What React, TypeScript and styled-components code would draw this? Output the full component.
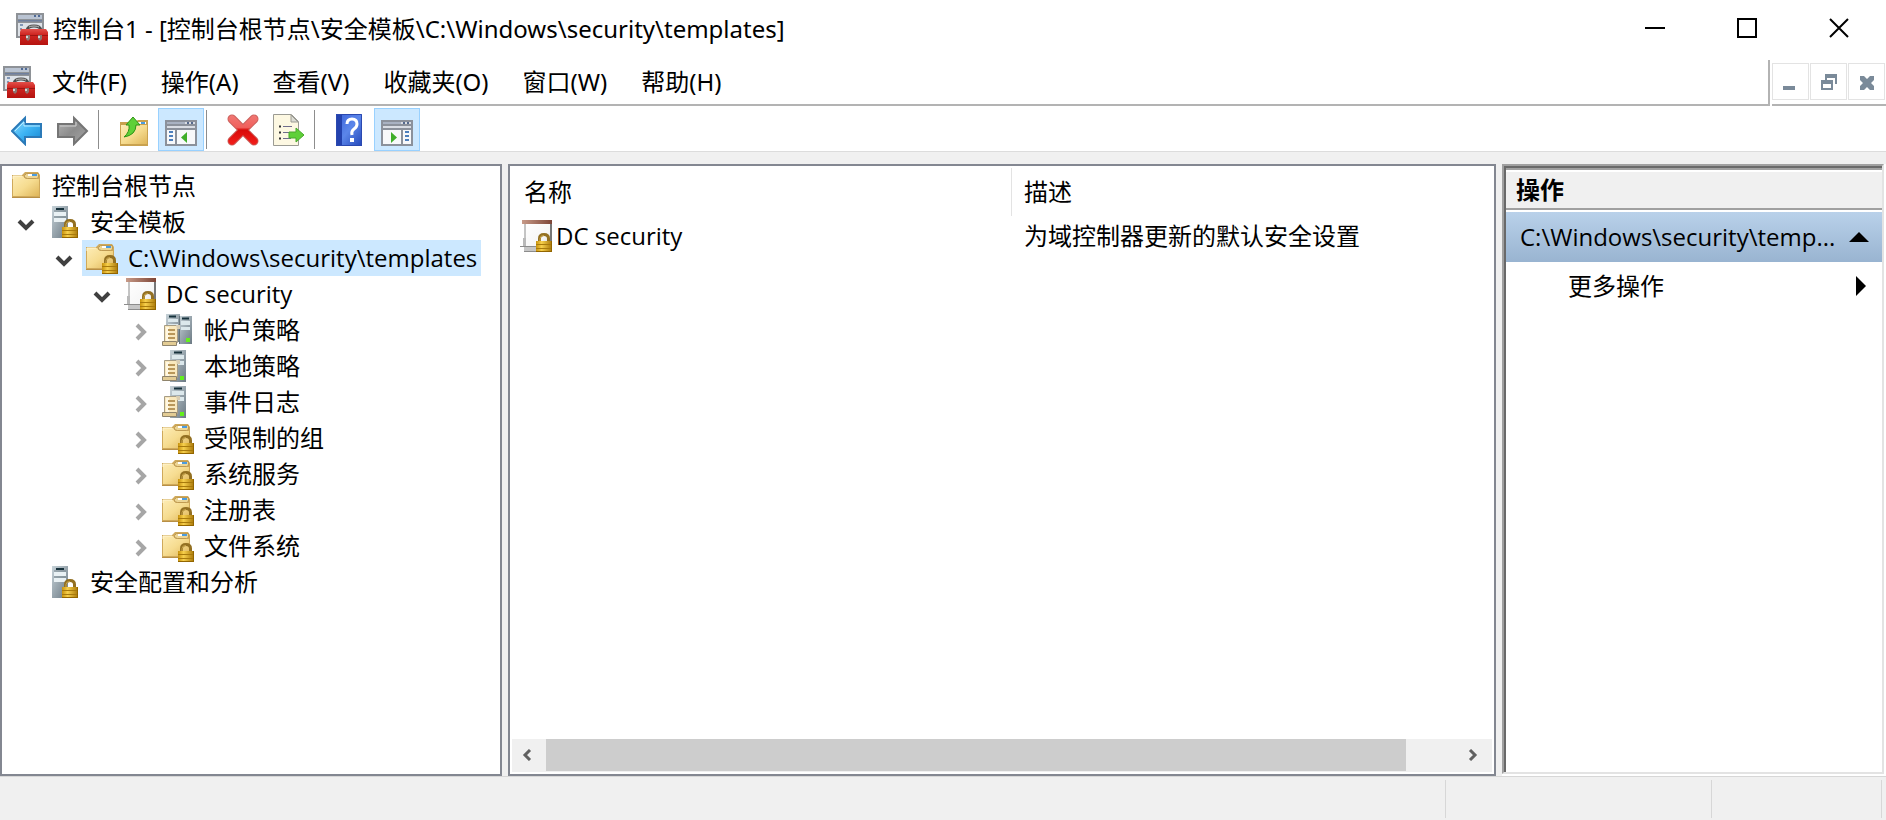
import React from 'react';
import styled, { createGlobalStyle, css } from 'styled-components';

const GlobalStyle = createGlobalStyle`
  *, *::before, *::after { box-sizing: border-box; }
  body {
    margin: 0;
    background: #f0f0f0;
    color: #000;
    font: 24px/36px "Open Sans", "Noto Sans CJK SC", sans-serif;
  }
  button {
    margin: 0;
    padding: 0;
    border: 0;
    background: none;
    color: inherit;
    font: inherit;
  }
  svg { display: block; flex: none; }
`;

/* ---------- frame ---------- */

const frameFont = '"Noto Sans", "Noto Sans CJK SC", sans-serif';

const Window = styled.div`
  display: flex;
  flex-direction: column;
  min-height: 100vh;
`;

const TitleBar = styled.header`
  display: flex;
  align-items: center;
  height: 60px;
  padding: 0 1px 2px 16px;
  background: #fff;
  font-family: ${frameFont};
`;

const Title = styled.h1`
  flex: 1;
  min-width: 0;
  margin: 0;
  padding-left: 5px;
  overflow: hidden;
  font-size: 24px;
  font-weight: 400;
  white-space: nowrap;
  text-overflow: ellipsis;
`;

const CaptionButton = styled.button`
  display: flex;
  align-self: flex-start;
  justify-content: center;
  align-items: center;
  width: 92px;
  height: 56px;
`;

const MenuRow = styled.div`
  display: flex;
  height: 48px;
  background: #fff;
  font-family: ${frameFont};
`;

const MenuBar = styled.nav`
  display: flex;
  flex: 1;
  align-items: center;
  padding-left: 3px;
  border-right: 2px solid #b3b3b3;
  border-bottom: 2px solid #b3b3b3;
  margin-bottom: 2px;
`;

const MenuButton = styled.button`
  padding: 0 17px;
  white-space: nowrap;
`;

const ChildControls = styled.div`
  display: flex;
  gap: 1px;
  margin: 0 0 2px 2px;
  padding: 3px 1px 0 0;
  border-bottom: 2px solid #b3b3b3;
`;

const ChildButton = styled.button`
  display: flex;
  justify-content: center;
  align-items: center;
  width: 37px;
  height: 37px;
  border: 1px solid #e3e3e3;
`;

const ToolBar = styled.div`
  display: flex;
  align-items: center;
  height: 44px;
  padding-left: 4px;
  border-bottom: 1px solid #dcdcdc;
  background: #fff;
`;

const ToolButton = styled.button<{ $on?: boolean }>`
  display: flex;
  justify-content: center;
  align-items: center;
  width: 46px;
  height: 43px;
  border: 1px solid transparent;
  ${(p) => p.$on && css`
    border-color: #99d1ff;
    background: #cce8ff;
  `}
`;

const ToolDivider = styled.span`
  width: 1px;
  height: 39px;
  margin: 0 13px 0 2px;
  background: #8d8d8d;
`;

const Panes = styled.main`
  display: flex;
  flex: 1;
  gap: 6px;
  padding-top: 12px;
`;

const Pane = styled.section`
  border: 2px solid #838791;
  background: #fff;
`;

/* ---------- tree ---------- */

const TreePane = styled(Pane)`
  flex: none;
  width: 502px;
`;

const Tree = styled.ul`
  margin: 0;
  padding: 2px 0 0;
  list-style: none;
`;

const TreeRow = styled.li<{ $level: number }>`
  display: flex;
  align-items: center;
  height: 36px;
  padding-left: ${(p) => 8 + 38 * Math.max(0, p.$level - 1)}px;
`;

const Expander = styled.button`
  display: flex;
  justify-content: center;
  flex: none;
  width: 32px;
  margin-right: 2px;
  padding-top: 4px;
`;

const ExpanderSpace = styled.span`
  flex: none;
  width: 34px;
`;

const TreeLabel = styled.button<{ $selected?: boolean; $root?: boolean }>`
  display: flex;
  align-items: center;
  gap: 10px;
  height: 36px;
  padding: 0 4px;
  margin-left: ${(p) => (p.$root ? -4 : 0)}px;
  background: ${(p) => (p.$selected ? '#cce8ff' : 'none')};
  white-space: nowrap;
`;

/* ---------- list ---------- */

const ListPane = styled(Pane)`
  display: flex;
  flex: 1;
  flex-direction: column;
  justify-content: space-between;
  min-width: 0;
  padding: 2px;
`;

const List = styled.table`
  width: 100%;
  border-collapse: separate;
  border-spacing: 0;
  table-layout: fixed;
`;

const HeadCell = styled.th<{ $wide?: boolean }>`
  height: 48px;
  padding: 0 12px;
  ${(p) => p.$wide && css`
    width: 500px;
    border-right: 1px solid #e3e3e3;
  `}
  font-weight: 400;
  text-align: left;
`;

const Cell = styled.td`
  height: 40px;
  padding: 0 12px;
  white-space: nowrap;
`;

const NameCell = styled(Cell)`
  padding-left: 8px;
`;

const ItemName = styled.span`
  display: flex;
  align-items: center;
  gap: 4px;
`;

const ScrollBar = styled.div`
  display: flex;
  height: 33px;
  background: #f0f0f0;
`;

const ScrollButton = styled.button`
  display: flex;
  flex: none;
  justify-content: center;
  align-items: center;
  width: 34px;
  padding: 0 4px 2px 0;
`;

const ScrollTrack = styled.div`
  display: flex;
  flex: 1;
  padding-bottom: 1px;
  &::after { content: ''; flex: 2; }
`;

const ScrollThumb = styled.div`
  flex: 33;
  background: #cdcdcd;
`;

/* ---------- actions ---------- */

const ActionsPane = styled.aside`
  flex: none;
  width: 384px;
  padding: 0 2px 2px 0;
  background: #fff;
`;

const ActionsEdge = styled.div`
  height: 100%;
  border: 2px solid #e3e3e3;
  border-top-color: #a0a0a0;
  border-left-color: #a0a0a0;
`;

const ActionsBody = styled.div`
  height: 100%;
  border-top: 2px solid #696969;
  border-left: 2px solid #696969;
`;

const ActionsHeading = styled.h2`
  height: 42px;
  margin: 0;
  padding-left: 10px;
  border-top: 2px solid #a0a0a0;
  border-bottom: 2px solid #a0a0a0;
  background: #f0f0f0;
  box-shadow: inset 0 2px #fff;
  font-size: 24px;
  font-weight: 700;
  line-height: 40px;
`;

const ActionGroup = styled.button`
  display: flex;
  justify-content: space-between;
  align-items: center;
  width: 100%;
  height: 50px;
  margin-top: 2px;
  padding: 0 13px 0 14px;
  background: linear-gradient(#b9d1ea, #99b4d1);
  white-space: nowrap;
`;

const ActionItem = styled(ActionGroup)`
  margin: 0;
  padding: 0 16px 2px 62px;
  background: none;
`;

/* ---------- status ---------- */

const StatusBar = styled.footer`
  display: flex;
  height: 44px;
  padding: 3px 4px 2px 0;
  border-top: 1px solid #d7d7d7;
`;

const StatusPart = styled.div<{ $width?: number }>`
  flex: ${(p) => (p.$width ? 'none' : '1')};
  width: ${(p) => (p.$width ? `${p.$width}px` : 'auto')};
  border-right: 1px solid #d7d7d7;
`;

/* ---------- icons ---------- */

const GradientDefs = styled.svg`
  position: absolute;
`;

const Gradients = () => (
  <GradientDefs width="0" height="0" aria-hidden="true">
    <defs>
      <linearGradient id="folder" x1="0" y1="0" x2="1" y2="1">
        <stop offset="0" stopColor="#fdecb5" /><stop offset=".5" stopColor="#f6dc90" /><stop offset="1" stopColor="#dfb65a" />
      </linearGradient>
      <linearGradient id="brass" x1="0" y1="0" x2="1" y2="0">
        <stop offset="0" stopColor="#c8920c" /><stop offset=".35" stopColor="#f6cf4c" /><stop offset="1" stopColor="#a97708" />
      </linearGradient>
      <linearGradient id="steel" x1="0" y1="0" x2="1" y2="1">
        <stop offset="0" stopColor="#c6d2d8" /><stop offset=".5" stopColor="#98a5ad" /><stop offset="1" stopColor="#6c7a84" />
      </linearGradient>
      <linearGradient id="red" x1="0" y1="0" x2="0" y2="1">
        <stop offset="0" stopColor="#e2504a" /><stop offset=".35" stopColor="#cf2622" /><stop offset="1" stopColor="#b5130f" />
      </linearGradient>
      <linearGradient id="cross" gradientUnits="userSpaceOnUse" x1="0" y1="0" x2="0" y2="32">
        <stop offset="0" stopColor="#f07a76" /><stop offset=".42" stopColor="#f0605c" /><stop offset=".5" stopColor="#d80a08" /><stop offset="1" stopColor="#f5201c" />
      </linearGradient>
      <linearGradient id="blue" x1="0" y1="0" x2="1" y2="1">
        <stop offset="0" stopColor="#9be0ff" /><stop offset=".5" stopColor="#3db4f4" /><stop offset="1" stopColor="#1585d0" />
      </linearGradient>
      <linearGradient id="gray" x1="0" y1="0" x2="1" y2="1">
        <stop offset="0" stopColor="#b4b4b4" /><stop offset=".5" stopColor="#8c8c8c" /><stop offset="1" stopColor="#a6a6a6" />
      </linearGradient>
      <linearGradient id="book" x1="0" y1="0" x2="1" y2="1">
        <stop offset="0" stopColor="#3a62d8" /><stop offset=".5" stopColor="#5b86ea" /><stop offset="1" stopColor="#2347b8" />
      </linearGradient>
      <linearGradient id="paper" x1="0" y1="0" x2="1" y2="1">
        <stop offset="0" stopColor="#ffffff" /><stop offset=".6" stopColor="#f6f6f6" /><stop offset="1" stopColor="#d2d2d2" />
      </linearGradient>
      <linearGradient id="brown" x1="0" y1="0" x2="1" y2="0">
        <stop offset="0" stopColor="#c79a88" /><stop offset="1" stopColor="#7d4536" />
      </linearGradient>
    </defs>
  </GradientDefs>
);

const Icon = ({ children }: { children: React.ReactNode }) => (
  <svg width="32" height="32" viewBox="0 0 32 32" aria-hidden="true">{children}</svg>
);

const Lock = ({ x = 0 }: { x?: number }) => (
  <g transform={`translate(${x} 0)`}>
    <path d="M19.500 22V18.500Q19.500 14.500 24 14.500T28.500 18.500V22" fill="none" stroke="#937022" strokeWidth="3" />
    <path d="M20 21V18.500Q20 15.500 24 15.500" fill="none" stroke="#c9a64c" strokeWidth="1" />
    <rect x="16" y="21" width="16" height="11" fill="url(#brass)" />
    <path d="M16 24.500h16M16 28.500h16" stroke="#a87a0c" strokeWidth="1" />
    <path d="M16 31.500h16M31.500 21v11" stroke="#936600" strokeWidth="1" />
  </g>
);

const FolderShape = ({ x = 0 }: { x?: number }) => (
  <g transform={`translate(${x} 0)`}>
    <path d="M0 5h10l3-3h13l2 3v23H0z" fill="#cfa95b" />
    <path d="M1 6h10l3 3h13v17H1z" fill="url(#folder)" />
    <path d="M12.500 5.500l2-2h12v4l-2 1h-9l-3-1z" fill="#ecd594" stroke="#bf9a52" strokeWidth="1" />
    <path d="M16 4h5v2h-5z" fill="#fff" /><path d="M20 4h5v2h-5z" fill="#4a9ce0" />
    <path d="M1 9V6h9" fill="none" stroke="#fff6d6" strokeWidth="1" />
    <path d="M0 27.500h28" stroke="#b88f45" strokeWidth="1" />
  </g>
);

const FolderIcon = () => <Icon><FolderShape x={2} /></Icon>;
const FolderLockIcon = () => <Icon><FolderShape /><Lock /></Icon>;

const ServerLockIcon = () => (
  <Icon>
    <rect x="4" y="0" width="16" height="32" fill="url(#steel)" />
    <path d="M6 6h12v4H6zM6 12h12v4H6z" fill="#e9f1f4" />
    <path d="M8 3h8" stroke="#17323c" strokeWidth="2" />
    <path d="M6 5h12M6 11h12" stroke="#7c8b93" strokeWidth="1" />
    <Lock x={-2} />
  </Icon>
);

const TemplateIcon = () => (
  <Icon>
    <path d="M5 3h26v28H5z" fill="url(#paper)" stroke="#8b8b8b" strokeWidth="1" />
    <path d="M30 4h2v28h-2z" fill="#777" />
    <path d="M2 0h30v4H2z" fill="url(#brown)" />
    <path d="M3 18h3v8H3z" fill="#b9b9b9" />
    <path d="M4 26h15v5H4z" fill="#c6c6c6" />
    <path d="M0 26.500h18M4 31.500h14" stroke="#8c8c8c" strokeWidth="1" />
    <Lock />
  </Icon>
);

const Scroll = ({ y = 0 }: { y?: number }) => (
  <g transform={`translate(0 ${y})`}>
    <path d="M2.500 10.500h13v17h-13z" fill="#f9e8bd" stroke="#a79c84" strokeWidth="1" />
    <path d="M4 12h3v14H4z" fill="#fff8e4" />
    <path d="M6 15h7M6 19h7M6 23h7" stroke="#b9975a" strokeWidth="2" />
    <path d="M.5 26.500h14v4H.5z" fill="#e3cc94" stroke="#8f846c" strokeWidth="1" />
    <path d="M14 10h4v4h-3z" fill="#d8cdb4" />
  </g>
);

const ServerIcon = () => (
  <Icon>
    <rect x="8" y="0" width="16" height="32" fill="url(#steel)" />
    <path d="M10 5h12v4H10zM10 11h12v4H10z" fill="#dce8ec" />
    <path d="M12 2.500h8" stroke="#17323c" strokeWidth="2" />
    <Scroll />
    <path d="M18 26h4v4h-4z" fill="#63f01c" />
  </Icon>
);

const ServersIcon = () => (
  <Icon>
    <rect x="4" y="0" width="14" height="28" fill="url(#steel)" />
    <path d="M6 5h10v3H6zM6 10h10v3H6z" fill="#dce8ec" />
    <path d="M7 2.500h7" stroke="#17323c" strokeWidth="2" />
    <rect x="17" y="2" width="13" height="28" fill="url(#steel)" />
    <path d="M19 7h9v4h-9zM19 13h9v3h-9z" fill="#dce8ec" />
    <path d="M20 4.500h7" stroke="#17323c" strokeWidth="2" />
    <path d="M17.500 2v28" stroke="#66747c" strokeWidth="1" />
    <Scroll y={1} />
    <path d="M24 24h4v4h-4z" fill="#63f01c" />
  </Icon>
);

const ConsoleIcon = () => (
  <Icon>
    <path d="M0 0h28v25H0z" fill="#8e9297" />
    <path d="M2 2h24v4H2z" fill="#b9c3d2" /><path d="M18 2h2v2h-2zM22 2h2v2h-2z" fill="#4f6a96" />
    <path d="M2 7h24v1.500H2z" fill="#6e7f9e" />
    <path d="M2 10h24v13H2z" fill="#dde2e8" />
    <path d="M4 12h3M4 16h2M4 20h2" stroke="#8196b5" strokeWidth="2" />
    <path d="M11 17q1-4 7-4t7 4" fill="none" stroke="#4f4f4f" strokeWidth="3" />
    <path d="M13 14q1-1 5-1t5 1" fill="none" stroke="#c0c0c0" strokeWidth="1" />
    <path d="M5 16h25l2 3v13H4V19z" fill="url(#red)" />
    <path d="M4 22.500h28" stroke="#a01512" strokeWidth="1" />
    <path d="M10 22h4v4l-2 2-2-2zM22 22h4v4l-2 2-2-2z" fill="#8e7570" />
    <path d="M10 23h2v2h-2zM22 23h2v2h-2z" fill="#d4dada" />
  </Icon>
);

const BackIcon = () => (
  <Icon>
    <path d="M1 17L14 4v6h16v13H14v7z" fill="url(#blue)" stroke="#2b7ab8" strokeWidth="2" />
    <path d="M4 17l9-9v4h16" fill="none" stroke="#b9eaff" strokeWidth="1" />
  </Icon>
);

const ForwardIcon = () => (
  <Icon>
    <path d="M30 17L17 4v6H1v13h16v7z" fill="url(#gray)" stroke="#757575" strokeWidth="2" />
    <path d="M3 12h16V8" fill="none" stroke="#cfcfcf" strokeWidth="1" />
  </Icon>
);

const UpFolderIcon = () => (
  <Icon>
    <path d="M1 8h15l3-2h10v26H1z" fill="#c9a24f" />
    <path d="M2 11h26v19H2z" fill="url(#folder)" />
    <path d="M19 8h8v2h-8z" fill="#fff" /><path d="M22 8h4v2h-4z" fill="#4a9ce0" />
    <path d="M14 3l7 8h-4q0 10-12 12 6-5 5-12H7z" fill="#5fd038" stroke="#2f9416" strokeWidth="1" />
  </Icon>
);

const WindowPaneIcon = ({ flip }: { flip?: boolean }) => (
  <Icon>
    <path d="M0 6h32v26H0z" fill="#8b919b" />
    <path d="M2 8h28v2H2zM2 12h28v2H2z" fill="#d9dde4" />
    <path d="M2 8h18v2H2z" fill="#a9b2c2" /><path d="M22 8h2v2h-2zM26 8h2v2h-2z" fill="#566a8e" />
    <g transform={flip ? 'translate(32 0) scale(-1 1)' : undefined}>
      <path d="M2 16h8v14H2zM12 16h18v14H12z" fill="#f7f8fa" />
      <path d="M4 18h4M4 22h4M4 26h4" stroke="#4d7fbd" strokeWidth="2" />
      <path d="M22 18v11l-6-5.500z" fill="#3fae2a" />
    </g>
  </Icon>
);

const DeleteIcon = () => (
  <Icon>
    <path d="M5 5L27 27M27 5L5 27" stroke="#c9605c" strokeWidth="9" strokeLinecap="round" />
    <path d="M5 5L27 27M27 5L5 27" stroke="url(#cross)" strokeWidth="7" strokeLinecap="round" />
  </Icon>
);

const ExportIcon = () => (
  <Icon>
    <path d="M.5.500h18l7 7V31.500H.5z" fill="#fdf8e2" stroke="#9b9b93" strokeWidth="1" />
    <path d="M18 1v7h7z" fill="#dcdcd4" stroke="#9b9b93" strokeWidth="1" />
    <path d="M6 12.500h2M6 18.500h2M6 24.500h2" stroke="#333" strokeWidth="2" />
    <path d="M10 12.500h9M10 18.500h8M10 24.500h8" stroke="#6f6c8c" strokeWidth="1" />
    <path d="M16 18h7v-4l8 7-8 7v-4h-7z" fill="#5fd038" stroke="#48a82c" strokeWidth="1" />
  </Icon>
);

const HelpIcon = () => (
  <Icon>
    <path d="M1 0h26v32H1z" fill="url(#book)" />
    <path d="M1 0h6v32H1z" fill="#2342ae" />
    <path d="M1.500.500h25v31h-25z" fill="none" stroke="#2b49b0" strokeWidth="1" />
    <path d="M12 10q0-5 5-5t5 5q0 3-3 5t-2 6" fill="none" stroke="#fff" strokeWidth="3" />
    <path d="M15 24h4v4h-4z" fill="#fff" />
  </Icon>
);

const Chevron = ({ open }: { open?: boolean }) => (
  <svg width="18" height="18" viewBox="0 0 18 18" aria-hidden="true">
    {open
      ? <path d="M2 6l7 7 7-7" fill="none" stroke="#404040" strokeWidth="4" />
      : <path d="M6 2l7 7-7 7" fill="none" stroke="#a6a6a6" strokeWidth="4" />}
  </svg>
);

const ScrollArrow = ({ right }: { right?: boolean }) => (
  <svg width="10" height="12" viewBox="0 0 10 12" aria-hidden="true">
    <path d={right ? 'M2 1l5 5-5 5' : 'M8 1L3 6l5 5'} fill="none" stroke="#606060" strokeWidth="3" />
  </svg>
);

/* ---------- data ---------- */

type Node = { label: string; level: number; icon: React.FC; open?: boolean; selected?: boolean };

const nodes: Node[] = [
  { label: '控制台根节点', level: 0, icon: FolderIcon },
  { label: '安全模板', level: 1, icon: ServerLockIcon, open: true },
  { label: 'C:\\Windows\\security\\templates', level: 2, icon: FolderLockIcon, open: true, selected: true },
  { label: 'DC security', level: 3, icon: TemplateIcon, open: true },
  { label: '帐户策略', level: 4, icon: ServersIcon, open: false },
  { label: '本地策略', level: 4, icon: ServerIcon, open: false },
  { label: '事件日志', level: 4, icon: ServerIcon, open: false },
  { label: '受限制的组', level: 4, icon: FolderLockIcon, open: false },
  { label: '系统服务', level: 4, icon: FolderLockIcon, open: false },
  { label: '注册表', level: 4, icon: FolderLockIcon, open: false },
  { label: '文件系统', level: 4, icon: FolderLockIcon, open: false },
  { label: '安全配置和分析', level: 1, icon: ServerLockIcon },
];

const menus = ['文件(F)', '操作(A)', '查看(V)', '收藏夹(O)', '窗口(W)', '帮助(H)'];

export default function App() {
  return (
    <Window>
      <GlobalStyle />
      <Gradients />
      <TitleBar>
        <ConsoleIcon />
        <Title>控制台1 - [控制台根节点\安全模板\C:\Windows\security\templates]</Title>
        <CaptionButton aria-label="最小化">
          <svg width="20" height="20"><path d="M0 10h20" stroke="#000" strokeWidth="2" /></svg>
        </CaptionButton>
        <CaptionButton aria-label="最大化">
          <svg width="20" height="20"><path d="M1 1h18v18H1z" fill="none" stroke="#000" strokeWidth="2" /></svg>
        </CaptionButton>
        <CaptionButton aria-label="关闭">
          <svg width="20" height="20"><path d="M1 1l18 18M19 1L1 19" stroke="#000" strokeWidth="2" /></svg>
        </CaptionButton>
      </TitleBar>
      <MenuRow>
        <MenuBar>
          <ConsoleIcon />
          {menus.map((m) => <MenuButton key={m}>{m}</MenuButton>)}
        </MenuBar>
        <ChildControls>
          <ChildButton aria-label="最小化子窗口">
            <svg width="16" height="16"><path d="M0 12h12v4H0z" fill="#7a8a99" /></svg>
          </ChildButton>
          <ChildButton aria-label="还原子窗口">
            <svg width="16" height="16">
              <path d="M4 0h12v10h-2V4H6v2H4z" fill="#7a8a99" />
              <path d="M0 6h12v10H0zM2 10v4h8v-4z" fill="#7a8a99" fillRule="evenodd" />
            </svg>
          </ChildButton>
          <ChildButton aria-label="关闭子窗口">
            <svg width="14" height="16"><path d="M0 2h4l3 3 3-3h4v4l-3 3 3 3v4h-4l-3-3-3 3H0v-4l3-3-3-3z" fill="#7a8a99" /></svg>
          </ChildButton>
        </ChildControls>
      </MenuRow>
      <ToolBar role="toolbar">
        <ToolButton aria-label="后退"><BackIcon /></ToolButton>
        <ToolButton aria-label="前进"><ForwardIcon /></ToolButton>
        <ToolDivider />
        <ToolButton aria-label="上一级"><UpFolderIcon /></ToolButton>
        <ToolButton aria-label="显示/隐藏控制台树" $on><WindowPaneIcon /></ToolButton>
        <ToolDivider />
        <ToolButton aria-label="删除"><DeleteIcon /></ToolButton>
        <ToolButton aria-label="导出列表"><ExportIcon /></ToolButton>
        <ToolDivider />
        <ToolButton aria-label="帮助"><HelpIcon /></ToolButton>
        <ToolButton aria-label="显示/隐藏操作窗格" $on><WindowPaneIcon flip /></ToolButton>
      </ToolBar>
      <Panes>
        <TreePane>
          <Tree>
            {nodes.map(({ label, level, icon: NodeIcon, open, selected }) => (
              <TreeRow key={label} $level={level}>
                {level > 0 && (open === undefined
                  ? <ExpanderSpace />
                  : <Expander aria-label={label} aria-expanded={open}><Chevron open={open} /></Expander>)}
                <TreeLabel $selected={selected} $root={level === 0}><NodeIcon />{label}</TreeLabel>
              </TreeRow>
            ))}
          </Tree>
        </TreePane>
        <ListPane>
          <List>
            <thead>
              <tr><HeadCell $wide>名称</HeadCell><HeadCell>描述</HeadCell></tr>
            </thead>
            <tbody>
              <tr>
                <NameCell><ItemName><TemplateIcon />DC security</ItemName></NameCell>
                <Cell>为域控制器更新的默认安全设置</Cell>
              </tr>
            </tbody>
          </List>
          <ScrollBar>
            <ScrollButton aria-label="向左滚动"><ScrollArrow /></ScrollButton>
            <ScrollTrack><ScrollThumb /></ScrollTrack>
            <ScrollButton aria-label="向右滚动"><ScrollArrow right /></ScrollButton>
          </ScrollBar>
        </ListPane>
        <ActionsPane>
          <ActionsEdge>
            <ActionsBody>
              <ActionsHeading>操作</ActionsHeading>
              <ActionGroup>
                C:\Windows\security\temp...
                <svg width="20" height="10"><path d="M10 0l10 10H0z" /></svg>
              </ActionGroup>
              <ActionItem>
                更多操作
                <svg width="10" height="20"><path d="M0 0l10 10L0 20z" /></svg>
              </ActionItem>
            </ActionsBody>
          </ActionsEdge>
        </ActionsPane>
      </Panes>
      <StatusBar>
        <StatusPart />
        <StatusPart $width={266} />
        <StatusPart $width={170} />
      </StatusBar>
    </Window>
  );
}
